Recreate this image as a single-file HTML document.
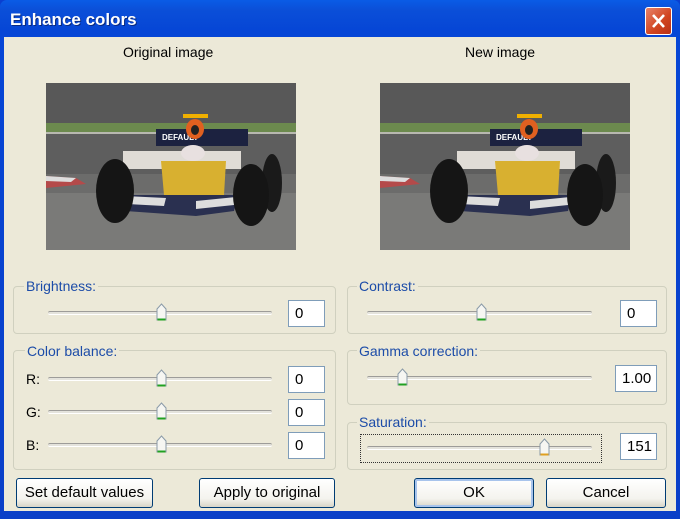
<!DOCTYPE html>
<html><head><meta charset="utf-8"><style>
*{box-sizing:border-box;margin:0;padding:0}
body{width:680px;height:519px;overflow:hidden;background:#0a3fd0;font-family:"Liberation Sans",sans-serif;position:relative}
.win{position:absolute;left:0;top:0;width:680px;height:519px;background:linear-gradient(#0a5ce6,#0b4fd8 10px,#0646d6 30px,#0a3fc8);border-radius:7px 7px 0 0}
.title{position:absolute;left:10px;top:10px;color:#fff;font-weight:bold;font-size:17px;text-shadow:1px 1px #0a2a80}
.close{position:absolute;left:645px;top:7px;width:27px;height:28px;background:linear-gradient(135deg,#e8836a,#d0431f 60%,#b83018);border:1px solid #fff;border-radius:3px}
.client{position:absolute;left:4px;top:37px;width:672px;height:474px;background:#ece9d8}
.a{position:absolute;font-size:14px;color:#000}
.lbl{position:absolute;font-size:14px;color:#1c4ca8;background:#ece9d8;padding:0 2px}
.grp{position:absolute;border:1px solid #d0d0bf;border-radius:4px}
.track{position:absolute;height:4px;border-top:1px solid #9d9c99;border-bottom:1px solid #fff;background:#e4e3dc;border-radius:2px}
.thumb{position:absolute;width:11px;height:19px}
.edit{position:absolute;background:#fff;border:1px solid #7f9db9;font-size:15px;padding:4px 0 0 6px;height:27px}
.btn{position:absolute;border:1px solid #003c74;border-radius:3px;background:linear-gradient(#fff,#f4f3ee 70%,#d8d5c8);font-size:15px;text-align:center;line-height:28px;height:30px}
.img{position:absolute;width:250px;height:167px}
</style></head><body>
<div class="win"></div>
<div class="title">Enhance colors</div>
<div class="close"><svg width="25" height="26" viewBox="0 0 25 26"><path d="M7 7L18 19M18 7L7 19" stroke="#fff" stroke-width="2.6"/></svg></div>
<div class="client"></div>
<div class="a" style="left:123px;top:44px">Original image</div>
<div class="a" style="left:465px;top:44px">New image</div>
<svg class="img" style="left:46px;top:83px" width="250" height="167">
<rect width="250" height="167" fill="#6c6c6b"/>
<rect width="250" height="41" fill="#585858"/>
<rect y="40" width="250" height="10" fill="#6c8a4e"/>
<rect y="49" width="250" height="2" fill="#b8b8b0"/>
<rect y="51" width="250" height="40" fill="#5e5e5e"/>
<rect y="110" width="250" height="57" fill="#7a7a78"/>
<path d="M0 93L30 95L40 101L0 105Z" fill="#b44a4a"/><path d="M0 93L30 95L25 99L0 98Z" fill="#ddd"/>
<ellipse cx="226" cy="100" rx="10" ry="29" fill="#1a1a1a"/>
<rect x="77" y="68" width="118" height="18" fill="#e0dcd6"/>
<rect x="110" y="46" width="92" height="17" fill="#1c2240"/>
<text x="116" y="57" font-size="8" font-weight="bold" fill="#fff" font-family="Liberation Sans">DEFAULT</text>
<rect x="137" y="31" width="25" height="4" fill="#f0b000"/>
<ellipse cx="149" cy="46" rx="9" ry="10" fill="#e06020"/><ellipse cx="149" cy="47" rx="4" ry="5" fill="#222"/>
<ellipse cx="147" cy="70" rx="12" ry="8" fill="#e8e0e0"/>
<path d="M115 78L180 78L178 112L118 112Z" fill="#d8b030"/>
<path d="M75 112L192 112L188 128L150 133L80 128Z" fill="#2a3050"/>
<path d="M78 113L120 115L118 123L80 121Z" fill="#ddd"/><path d="M150 118L190 114L188 122L150 126Z" fill="#ddd"/>
<ellipse cx="69" cy="108" rx="19" ry="32" fill="#151515"/>
<ellipse cx="205" cy="112" rx="18" ry="31" fill="#151515"/>
</svg>
<svg class="img" style="left:380px;top:83px" width="250" height="167">
<rect width="250" height="167" fill="#6c6c6b"/>
<rect width="250" height="41" fill="#585858"/>
<rect y="40" width="250" height="10" fill="#6c8a4e"/>
<rect y="49" width="250" height="2" fill="#b8b8b0"/>
<rect y="51" width="250" height="40" fill="#5e5e5e"/>
<rect y="110" width="250" height="57" fill="#7a7a78"/>
<path d="M0 93L30 95L40 101L0 105Z" fill="#b44a4a"/><path d="M0 93L30 95L25 99L0 98Z" fill="#ddd"/>
<ellipse cx="226" cy="100" rx="10" ry="29" fill="#1a1a1a"/>
<rect x="77" y="68" width="118" height="18" fill="#e0dcd6"/>
<rect x="110" y="46" width="92" height="17" fill="#1c2240"/>
<text x="116" y="57" font-size="8" font-weight="bold" fill="#fff" font-family="Liberation Sans">DEFAULT</text>
<rect x="137" y="31" width="25" height="4" fill="#f0b000"/>
<ellipse cx="149" cy="46" rx="9" ry="10" fill="#e06020"/><ellipse cx="149" cy="47" rx="4" ry="5" fill="#222"/>
<ellipse cx="147" cy="70" rx="12" ry="8" fill="#e8e0e0"/>
<path d="M115 78L180 78L178 112L118 112Z" fill="#d8b030"/>
<path d="M75 112L192 112L188 128L150 133L80 128Z" fill="#2a3050"/>
<path d="M78 113L120 115L118 123L80 121Z" fill="#ddd"/><path d="M150 118L190 114L188 122L150 126Z" fill="#ddd"/>
<ellipse cx="69" cy="108" rx="19" ry="32" fill="#151515"/>
<ellipse cx="205" cy="112" rx="18" ry="31" fill="#151515"/>
</svg>

<div class="grp" style="left:13px;top:286px;width:323px;height:48px"></div>
<div class="lbl" style="left:24px;top:278px">Brightness:</div>
<div class="grp" style="left:13px;top:350px;width:323px;height:120px"></div>
<div class="lbl" style="left:25px;top:343px">Color balance:</div>
<div class="grp" style="left:347px;top:286px;width:320px;height:48px"></div>
<div class="lbl" style="left:357px;top:278px">Contrast:</div>
<div class="grp" style="left:347px;top:350px;width:320px;height:55px"></div>
<div class="lbl" style="left:357px;top:343px">Gamma correction:</div>
<div class="grp" style="left:347px;top:422px;width:320px;height:48px"></div>
<div class="lbl" style="left:357px;top:414px">Saturation:</div>

<div class="a" style="left:26px;top:371px">R:</div>
<div class="a" style="left:26px;top:404px">G:</div>
<div class="a" style="left:26px;top:437px">B:</div>

<div class="track" style="left:48px;top:311px;width:224px"></div>
<div class="track" style="left:48px;top:377px;width:224px"></div>
<div class="track" style="left:48px;top:410px;width:224px"></div>
<div class="track" style="left:48px;top:443px;width:224px"></div>
<div class="track" style="left:367px;top:311px;width:225px"></div>
<div class="track" style="left:367px;top:376px;width:225px"></div>
<div class="track" style="left:367px;top:446px;width:225px"></div>

<svg width="0" height="0" style="position:absolute"><defs><symbol id="th" viewBox="0 0 11 19"><path d="M1 6L5.5 1L10 6L10 17L1 17Z" fill="#f6f6f2" stroke="#8a9aa8"/><path d="M1.5 16.5L9.5 16.5" stroke="#21a121" stroke-width="2"/></symbol>
<symbol id="th2" viewBox="0 0 11 19"><path d="M1 6L5.5 1L10 6L10 17L1 17Z" fill="#f6f6f2" stroke="#8a9aa8"/><path d="M1.5 16.5L9.5 16.5" stroke="#e0a020" stroke-width="2"/></symbol></defs></svg>
<svg class="thumb" style="left:156px;top:303px"><use href="#th"/></svg>
<svg class="thumb" style="left:156px;top:369px"><use href="#th"/></svg>
<svg class="thumb" style="left:156px;top:402px"><use href="#th"/></svg>
<svg class="thumb" style="left:156px;top:435px"><use href="#th"/></svg>
<svg class="thumb" style="left:476px;top:303px"><use href="#th"/></svg>
<svg class="thumb" style="left:397px;top:368px"><use href="#th"/></svg>
<svg class="thumb" style="left:539px;top:438px"><use href="#th2"/></svg>
<div style="position:absolute;left:360px;top:434px;width:242px;height:29px;border:1px dotted #333"></div>

<div class="edit" style="left:288px;top:300px;width:37px">0</div>
<div class="edit" style="left:288px;top:366px;width:37px">0</div>
<div class="edit" style="left:288px;top:399px;width:37px">0</div>
<div class="edit" style="left:288px;top:432px;width:37px">0</div>
<div class="edit" style="left:620px;top:300px;width:37px">0</div>
<div class="edit" style="left:615px;top:365px;width:42px">1.00</div>
<div class="edit" style="left:620px;top:433px;width:37px">151</div>

<div class="btn" style="left:16px;top:478px;width:137px">Set default values</div>
<div class="btn" style="left:199px;top:478px;width:136px">Apply to original</div>
<div class="btn" style="left:414px;top:478px;width:120px;box-shadow:inset 0 0 0 2px #a8c4ec">OK</div>
<div class="btn" style="left:546px;top:478px;width:120px">Cancel</div>
</body></html>
